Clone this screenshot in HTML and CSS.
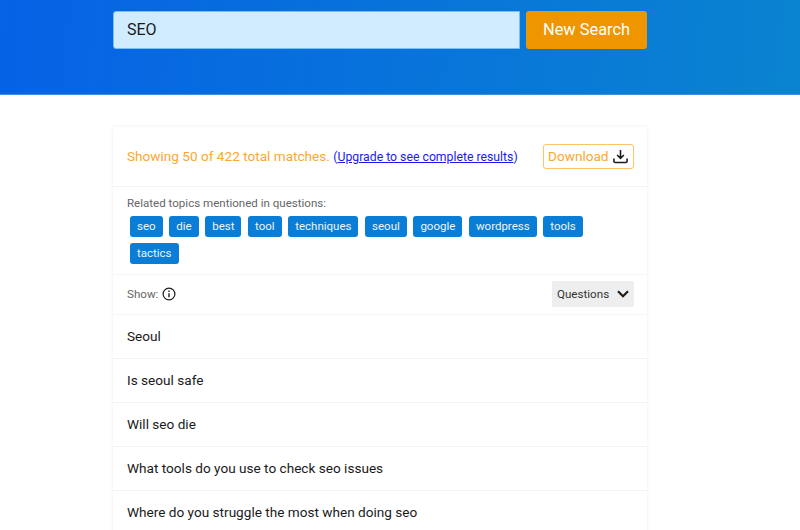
FILE: index.html
```html
<!DOCTYPE html>
<html lang="en">
<head>
<meta charset="utf-8">
<title>Search results</title>
<link rel="stylesheet" href="styles.css">
</head>
<body>
<header class="hero">
  <form class="search">
    <div class="search-input">SEO</div>
    <div class="search-btn">New Search</div>
  </form>
</header>
<main class="card">
  <section class="summary">
    <p class="summary-text"><span class="count">Showing 50 of 422 total matches.</span> <span class="upgrade">(<a href="#">Upgrade to see complete results</a>)</span></p>
    <a class="download" href="#">Download
      <svg class="download-icon" viewBox="0 0 16 16" width="15" height="15" fill="none" stroke="#1c1c1c" stroke-width="1.7"><path d="M8 1v8.6M4.4 6.4 8 10l3.6-3.6M1 10v3a1.4 1.4 0 0 0 1.4 1.4h11.2A1.4 1.4 0 0 0 15 13v-3"/></svg>
    </a>
  </section>
  <section class="topics">
    <div class="topics-label">Related topics mentioned in questions:</div>
    <div class="tags">
      <span class="tag">seo</span><span class="tag">die</span><span class="tag">best</span><span class="tag">tool</span><span class="tag">techniques</span><span class="tag">seoul</span><span class="tag">google</span><span class="tag">wordpress</span><span class="tag">tools</span><span class="tag">tactics</span>
    </div>
  </section>
  <section class="show">
    <div class="show-label">Show:
      <svg viewBox="0 0 14 14" width="14" height="14" fill="none" stroke="#1c1c1c" stroke-width="1.2"><circle cx="7" cy="7" r="5.9"/><path d="M7 6.2v4" stroke-width="1.4"/><path d="M7 3.6v1.5" stroke-width="1.4"/></svg>
    </div>
    <div class="select"><span class="select-text">Questions</span>
      <svg viewBox="0 0 12 8" width="12" height="8" fill="none" stroke="#1c1c1c" stroke-width="2.2"><path d="M1 1.2 6 6.2l5-5"/></svg>
    </div>
  </section>
  <ul class="list">
    <li>Seoul</li>
    <li>Is seoul safe</li>
    <li>Will seo die</li>
    <li>What tools do you use to check seo issues</li>
    <li>Where do you struggle the most when doing seo</li>
  </ul>
</main>
</body>
</html>
```
FILE: styles.css
```css
* { box-sizing: border-box; }
html, body { margin: 0; padding: 0; height: 530px; overflow: hidden; background: #fff; }
body { font-family: Roboto, "Liberation Sans", sans-serif; color: #212121; }
.hero {
  height: 95px;
  padding-top: 11px;
  background: linear-gradient(95deg, #0662e6 0%, #0a84d0 100%);
  border-bottom: 1px solid #3f8fe4;
}
.search { width: 534px; margin-left: 113px; display: flex; gap: 6px; }
.search-input {
  width: 407px; height: 38px; padding-left: 13px;
  background: #d2ecff; border: 1px solid #7cbcf4; border-radius: 3px 0 0 3px;
  font-size: 16px; line-height: 36px; color: #1a1a1a;
}
.search-btn {
  width: 121px; height: 38px;
  background: #ee9500; border-radius: 3px;
  color: #fff; font-size: 16.4px; line-height: 37px; text-align: center;
}
.card {
  width: 534px; margin: 32px 0 0 113px;
  background: #fff; border-radius: 3px;
  box-shadow: 0 0 4px rgba(0,0,0,.07);
}
.summary {
  height: 60px; padding: 0 13px 0 14px; display: flex; align-items: center; justify-content: space-between;
  border-bottom: 1px solid #f3f3f3;
}
.summary-text { margin: 0; font-size: 13.6px; line-height: 18px; margin-top: -1px; white-space: nowrap; }
.count { color: #fba82c; }
.upgrade { font-size: 12.25px; color: #1a1aee; }
.upgrade a { color: #1a1aee; }
.download {
  display: flex; align-items: center; gap: 4px;
  height: 25px; width: 91px; padding-left: 4px;
  border: 1px solid #fbc469; border-radius: 3px;
  color: #fba82c; font-size: 13.6px; line-height: 21px; text-decoration: none; white-space: nowrap;
}
.topics { height: 88px; padding: 9px 14px 0; border-bottom: 1px solid #f6f6f6; }
.topics-label { font-size: 11.55px; line-height: 14px; color: #666; }
.tags { display: flex; flex-wrap: wrap; gap: 6px 6.6px; padding: 6px 3px 0; }
.tag {
  height: 21px; padding: 0 7px; background: #0a7dd6; border-radius: 3px;
  color: #eaf5fd; font-size: 11.5px; line-height: 20px;
}
.show {
  height: 40px; padding: 0 13px 0 14px; display: flex; align-items: center; justify-content: space-between;
  border-bottom: 1px solid #f6f6f6;
}
.show-label { display: flex; align-items: center; gap: 4px; font-size: 11.6px; line-height: 14px; color: #666; margin-top: -1px; }
.select {
  width: 82px; height: 26px; padding: 0 5px; background: #eeeeee; border-radius: 2px;
  display: flex; align-items: center; justify-content: space-between;
  font-size: 11.6px; color: #333; margin-top: -1px;
}
.select-text { line-height: 14px; margin-top: -1px; }
.list { list-style: none; margin: 0; padding: 0; }
.list li {
  height: 44px; padding: 0 14px; border-bottom: 1px solid #f3f3f3;
  font-size: 13.6px; line-height: 42px; color: #1a1a1a;
}
```
